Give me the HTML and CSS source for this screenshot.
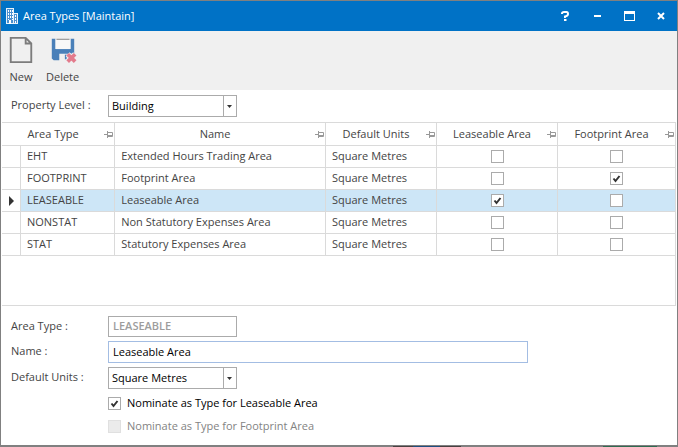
FILE: index.html
```html
<!DOCTYPE html>
<html lang="en">
<head>
  <meta charset="UTF-8" />
  <meta name="viewport" content="width=device-width, initial-scale=1.0" />
  <title>Area Types [Maintain]</title>
  <link rel="stylesheet" href="styles.css">
</head>
<body>

  <div class="window">
    <header class="titlebar">
      <svg class="app-icon" width="14" height="16" viewBox="0 0 14 16">
        <path d="M1 0h8v5h4v11H1z" fill="#e6f1fa" />
        <path d="M2 1h6v14H2zM9 6h3v9H9z" fill="#4b90cf" />
        <path d="M3 2h1v2H3zM5 2h1v2H5zM7 2h1v2H7zM3 5h1v2H3zM5 5h1v2H5zM7 5h1v2H7zM3 8h1v2H3zM5 8h1v2H5zM7 8h1v2H7zM3 11h1v1H3zM7 11h1v1H7zM10 7h1v2h-1zM10 10h1v2h-1zM10 13h1v2h-1zM4 12h2v4H4z" fill="#fff" />
      </svg>
      <h1>Area Types [Maintain]</h1>
      <div class="window-buttons">
        <button type="button" aria-label="Help">
          <svg width="9" height="11" viewBox="0 0 9 11" fill="none" stroke="#fff" stroke-width="2"><path d="M1 3V2.5Q1 1 3 1h2.500Q7 1 7 3T4 5.500V7M3 9h2.500" /></svg>
        </button>
        <button type="button" aria-label="Minimize">
          <svg width="7" height="11" viewBox="0 0 7 11"><path d="M0 4h7v2H0z" fill="#fff" /></svg>
        </button>
        <button type="button" aria-label="Maximize">
          <svg width="11" height="10" viewBox="0 0 11 10"><path d="M0 0h11v10H0zM1 3v6h9V3z" fill="#fff" fill-rule="evenodd" /></svg>
        </button>
        <button type="button" aria-label="Close">
          <svg width="8" height="8" viewBox="0 0 8 8"><path d="M1 1l6 6M7 1L1 7" stroke="#fff" stroke-width="2" /></svg>
        </button>
      </div>
    </header>

    <div class="toolbar">
      <button type="button">
        <svg width="26" height="30" viewBox="0 0 26 30" fill="none" stroke="#7c7c7c" stroke-width="2"><path d="M2 2h16l6 6v20H2zM18 2v6h6" /></svg>
        New
      </button>
      <button type="button">
        <svg width="28" height="30" viewBox="0 0 28 30">
          <path d="M2 3h4v11h16V3h4v22l-1 1H4l-2-2z" fill="#4a80b9" />
          <path d="M6 3h16v11H6z" fill="#f8f8f8" />
          <path d="M7 3.500h14" stroke="#7c7c7c" />
          <path d="M10 19h16v9H10z" fill="#f0f0f0" />
          <path d="M16 20h2v5h-2z" fill="#4a80b9" />
          <path d="M19 19.500l8 8M27 19.500l-8 8" stroke="#f0f0f0" stroke-width="6" />
          <path d="M19 19.500l8 8M27 19.500l-8 8" stroke="#e37b8c" stroke-width="4" />
        </svg>
        Delete
      </button>
    </div>

    <div class="filter">
      <label for="level">Property Level :</label>
      <select id="level">
        <option>Building</option>
      </select>
    </div>

    <div class="grid">
      <table>
        <colgroup>
          <col class="col-marker"><col class="col-type"><col class="col-name"><col class="col-units"><col class="col-lease"><col class="col-foot">
        </colgroup>
        <thead>
          <tr>
            <th colspan="2"><div class="head"><span>Area Type</span><svg width="9" height="7"><use href="#pin" /></svg></div></th>
            <th><div class="head"><span>Name</span><svg width="9" height="7"><use href="#pin" /></svg></div></th>
            <th><div class="head"><span>Default Units</span><svg width="9" height="7"><use href="#pin" /></svg></div></th>
            <th><div class="head"><span>Leaseable Area</span><svg width="9" height="7"><use href="#pin" /></svg></div></th>
            <th><div class="head"><span>Footprint Area</span><svg width="9" height="7"><use href="#pin" /></svg></div></th>
          </tr>
        </thead>
        <tbody>
          <tr>
            <td></td><td>EHT</td><td>Extended Hours Trading Area</td><td>Square Metres</td>
            <td class="tick"><input type="checkbox" aria-label="EHT leaseable"></td>
            <td class="tick"><input type="checkbox" aria-label="EHT footprint"></td>
          </tr>
          <tr>
            <td></td><td>FOOTPRINT</td><td>Footprint Area</td><td>Square Metres</td>
            <td class="tick"><input type="checkbox" aria-label="FOOTPRINT leaseable"></td>
            <td class="tick"><input type="checkbox" aria-label="FOOTPRINT footprint" checked></td>
          </tr>
          <tr class="selected">
            <td class="marker"><svg width="5" height="10" viewBox="0 0 5 10"><path d="M0 0l5 5-5 5z" fill="#333" /></svg></td><td>LEASEABLE</td><td>Leaseable Area</td><td>Square Metres</td>
            <td class="tick"><input type="checkbox" aria-label="LEASEABLE leaseable" checked></td>
            <td class="tick"><input type="checkbox" aria-label="LEASEABLE footprint"></td>
          </tr>
          <tr>
            <td></td><td>NONSTAT</td><td>Non Statutory Expenses Area</td><td>Square Metres</td>
            <td class="tick"><input type="checkbox" aria-label="NONSTAT leaseable"></td>
            <td class="tick"><input type="checkbox" aria-label="NONSTAT footprint"></td>
          </tr>
          <tr>
            <td></td><td>STAT</td><td>Statutory Expenses Area</td><td>Square Metres</td>
            <td class="tick"><input type="checkbox" aria-label="STAT leaseable"></td>
            <td class="tick"><input type="checkbox" aria-label="STAT footprint"></td>
          </tr>
        </tbody>
      </table>
    </div>

    <form class="details">
      <label for="type">Area Type :</label>
      <input type="text" id="type" class="short" value="LEASEABLE" disabled>

      <label for="name">Name :</label>
      <input type="text" id="name" class="long" value="Leaseable Area">

      <label for="units">Default Units :</label>
      <select id="units">
        <option>Square Metres</option>
      </select>

      <div class="options">
        <label class="check"><input type="checkbox" checked>Nominate as Type for Leaseable Area</label>
        <label class="check off"><input type="checkbox" disabled>Nominate as Type for Footprint Area</label>
      </div>
    </form>
    <div class="edge"></div>
  </div>

  <svg class="defs" width="0" height="0">
    <symbol id="pin" viewBox="0 0 9 7">
      <path d="M0 3.500h3M3.500 0v7M3.500 1.500h5v4h-5M3.500 4.500h5" fill="none" stroke="#999" />
    </symbol>
  </svg>

</body>
</html>
```
FILE: styles.css
```css
* {
  box-sizing: border-box;
}

body {
  margin: 0;
  font-family: "Open Sans", "Noto Sans", sans-serif;
  font-size: 11px;
  line-height: 16px;
  color: #444;
  background: #fff;
}

button, input, select {
  font: inherit;
  margin: 0;
}

.window {
  display: flex;
  flex-direction: column;
  min-height: 100vh;
  border: 1px solid #808080;
  border-bottom: none;
}

.titlebar {
  display: flex;
  align-items: center;
  height: 30px;
  padding: 0 4px;
  background: #0072c6;
  color: #fff;
}

.titlebar h1 {
  flex: 1;
  margin: 0 0 0 4px;
  font-size: 11px;
  font-weight: normal;
}

.window-buttons {
  display: flex;
  gap: 8px;
}

.window-buttons button {
  display: flex;
  align-items: center;
  justify-content: center;
  width: 24px;
  height: 24px;
  padding: 0;
  border: none;
  background: none;
}

.toolbar {
  display: flex;
  gap: 4px;
  height: 59px;
  padding: 5px 3px;
  background: #f0f0f0;
}

.toolbar button {
  display: flex;
  flex-direction: column;
  align-items: center;
  gap: 5px;
  padding: 0 4px;
  border: none;
  background: none;
  color: #444;
}

.filter {
  display: flex;
  padding: 5px 10px;
}

.filter label {
  width: 97px;
  padding-top: 2px;
}

select {
  appearance: none;
  width: 129px;
  height: 22px;
  padding: 0 3px;
  border: 1px solid #ababab;
  border-radius: 0;
  color: #000;
  background: linear-gradient(#ababab, #ababab) right 12px top / 1px 100% no-repeat,
    url("data:image/svg+xml,%3Csvg xmlns='http://www.w3.org/2000/svg' width='5' height='3'%3E%3Cpath d='M0 0h5L2.5 3z' fill='%23333'/%3E%3C/svg%3E") right 4px center no-repeat #fff;
}

.grid {
  height: 184px;
  margin: 0 1px;
  border: 1px solid #dadada;
  border-left: none;
}

table {
  width: 100%;
  table-layout: fixed;
  border-collapse: separate;
  border-spacing: 0;
}

.col-marker { width: 19px; }
.col-type { width: 14%; }
.col-units { width: 111px; }
.col-lease { width: 121px; }
.col-foot { width: 117px; }

th, td {
  height: 22px;
  padding: 0 6px 2px;
  border-right: 1px solid #dadada;
  border-bottom: 1px solid #dadada;
  font-weight: normal;
  white-space: nowrap;
}

th {
  height: 23px;
  padding: 0 1px 0 0;
}

th:last-child, td:last-child {
  border-right: none;
}

.head {
  display: flex;
  align-items: center;
}

.head span {
  flex: 1;
  text-align: center;
}

.tick {
  padding: 0;
}

.selected td {
  background: #cde6f7;
}

.selected .marker {
  padding: 0;
  background: #fff;
}

.marker svg, .tick input {
  display: block;
  margin: 0 auto;
}

input[type="checkbox"] {
  appearance: none;
  width: 13px;
  height: 13px;
  border: 1px solid #ababab;
  background: #fff;
}

input[type="checkbox"]:checked {
  background: url("data:image/svg+xml,%3Csvg xmlns='http://www.w3.org/2000/svg' width='11' height='11'%3E%3Cpath d='M2.500 5.500l2 2.500 4-5' fill='none' stroke='%23333' stroke-width='2'/%3E%3C/svg%3E") center no-repeat #fff;
}

input[type="checkbox"]:disabled {
  border-color: #e0e0e0;
  background: #ebebeb;
}

.details {
  display: grid;
  grid-template-columns: 97px 1fr;
  row-gap: 4px;
  padding: 10px;
}

input[type="text"] {
  height: 22px;
  padding: 0 4px 2px;
  border: 1px solid #ababab;
  background: #fff;
  color: #000;
}

input[type="text"]:disabled {
  color: #9d9d9d;
  font-weight: 600;
}

.details > label {
  padding-top: 2px;
}

.details .short {
  width: 129px;
  height: 21px;
}

.details .long {
  width: 100%;
  max-width: 420px;
  border-color: #a3bde3;
}

.options {
  grid-column: 2;
  display: flex;
  flex-direction: column;
  gap: 7px;
  padding-top: 2px;
}

.check {
  display: flex;
  align-items: center;
  gap: 6px;
  color: #000;
}

.check.off {
  color: #838383;
}

/* bottom frame, with the desktop showing through */
.edge {
  height: 2px;
  margin-top: auto;
  border-top: 1px solid #808080;
  background: linear-gradient(90deg, #808080 58%, #484040 58% 61%, #1f4e80 61% 65%, #484040 65% 68%, #808080 68% 89%, #2f6a50 89% 97%, #808080 97%);
}

.defs {
  position: absolute;
}
```
